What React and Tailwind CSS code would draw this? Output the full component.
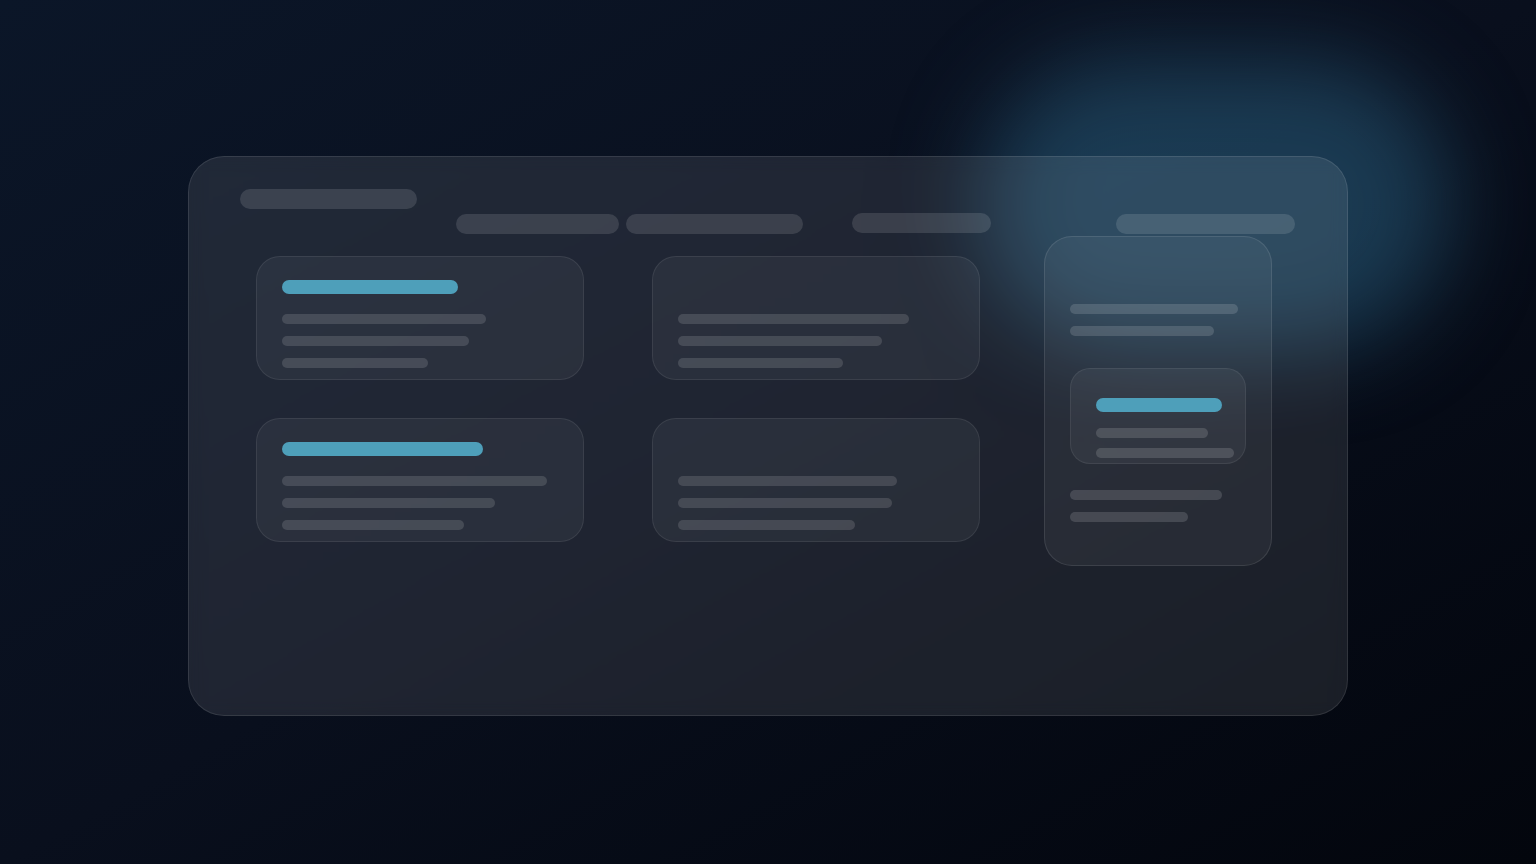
export default function App() {
  return (
    <div className="relative min-h-screen w-full overflow-hidden bg-gradient-to-br from-[#0b1628] via-[#090f1d] to-[#03060d]">
      {/* glow behind the glass panel */}
      <div className="pointer-events-none absolute left-[980px] top-[60px] h-[290px] w-[470px] rounded-full bg-[#2b6688]/50 blur-[44px]" />

      <div className="relative flex justify-start pl-[188px] pt-[156px]">
        <div className="h-[560px] w-[1160px] rounded-[36px] border border-white/10 bg-white/[0.09] pl-[51px] pt-[32px] backdrop-blur-sm">
          {/* header */}
          <div className="h-5 w-[177px] rounded-full bg-white/[0.12]" />
          <div className="mt-[5px] flex items-start pl-[216px]">
            <div className="h-5 w-[163px] rounded-full bg-white/[0.12]" />
            <div className="ml-[7px] h-5 w-[177px] rounded-full bg-white/[0.12]" />
            <div className="-mt-px ml-[49px] h-5 w-[139px] rounded-full bg-white/[0.12]" />
            <div className="ml-[125px] h-5 w-[179px] rounded-full bg-white/[0.12]" />
          </div>

          {/* content */}
          <div className="flex items-start pl-[16px]">
            <div className="mt-[22px] grid grid-cols-[328px_328px] gap-x-[68px] gap-y-[38px]">
              <Card accent="w-[176px]" lines={["w-[204px]", "w-[187px]", "w-[146px]"]} />
              <Card lines={["w-[231px]", "w-[204px]", "w-[165px]"]} />
              <Card accent="w-[201px]" lines={["w-[265px]", "w-[213px]", "w-[182px]"]} />
              <Card lines={["w-[219px]", "w-[214px]", "w-[177px]"]} />
            </div>

            {/* side column */}
            <div className="ml-[64px] mt-[2px] h-[330px] w-[228px] rounded-[28px] border border-white/10 bg-white/[0.05] pl-[25px] pt-[67px]">
              <div className="h-2.5 w-[168px] rounded-full bg-white/[0.14]" />
              <div className="mt-3 h-2.5 w-[144px] rounded-full bg-white/[0.14]" />

              <div className="mt-8 h-24 w-[176px] rounded-[20px] border border-white/[0.07] bg-white/[0.05] pl-[25px] pt-[29px]">
                <div className="h-3.5 w-[126px] rounded-full bg-[#4e9fba]" />
                <div className="mt-4 h-2.5 w-[112px] rounded-full bg-white/[0.14]" />
                <div className="mt-2.5 h-2.5 w-[138px] rounded-full bg-white/[0.14]" />
              </div>

              <div className="mt-[26px] h-2.5 w-[152px] rounded-full bg-white/[0.14]" />
              <div className="mt-3 h-2.5 w-[118px] rounded-full bg-white/[0.14]" />
            </div>
          </div>
        </div>
      </div>
    </div>
  );
}

function Card({ accent, lines }) {
  return (
    <div className="h-[124px] w-[328px] rounded-[24px] border border-white/[0.08] bg-white/[0.05] pl-[25px] pt-[23px]">
      {accent ? (
        <div className={`h-3.5 rounded-full bg-[#4e9fba] ${accent}`} />
      ) : (
        <div className="h-3.5" />
      )}
      <div className="mt-5 flex flex-col gap-3">
        {lines.map((w, i) => (
          <div key={i} className={`h-2.5 rounded-full bg-white/[0.13] ${w}`} />
        ))}
      </div>
    </div>
  );
}
